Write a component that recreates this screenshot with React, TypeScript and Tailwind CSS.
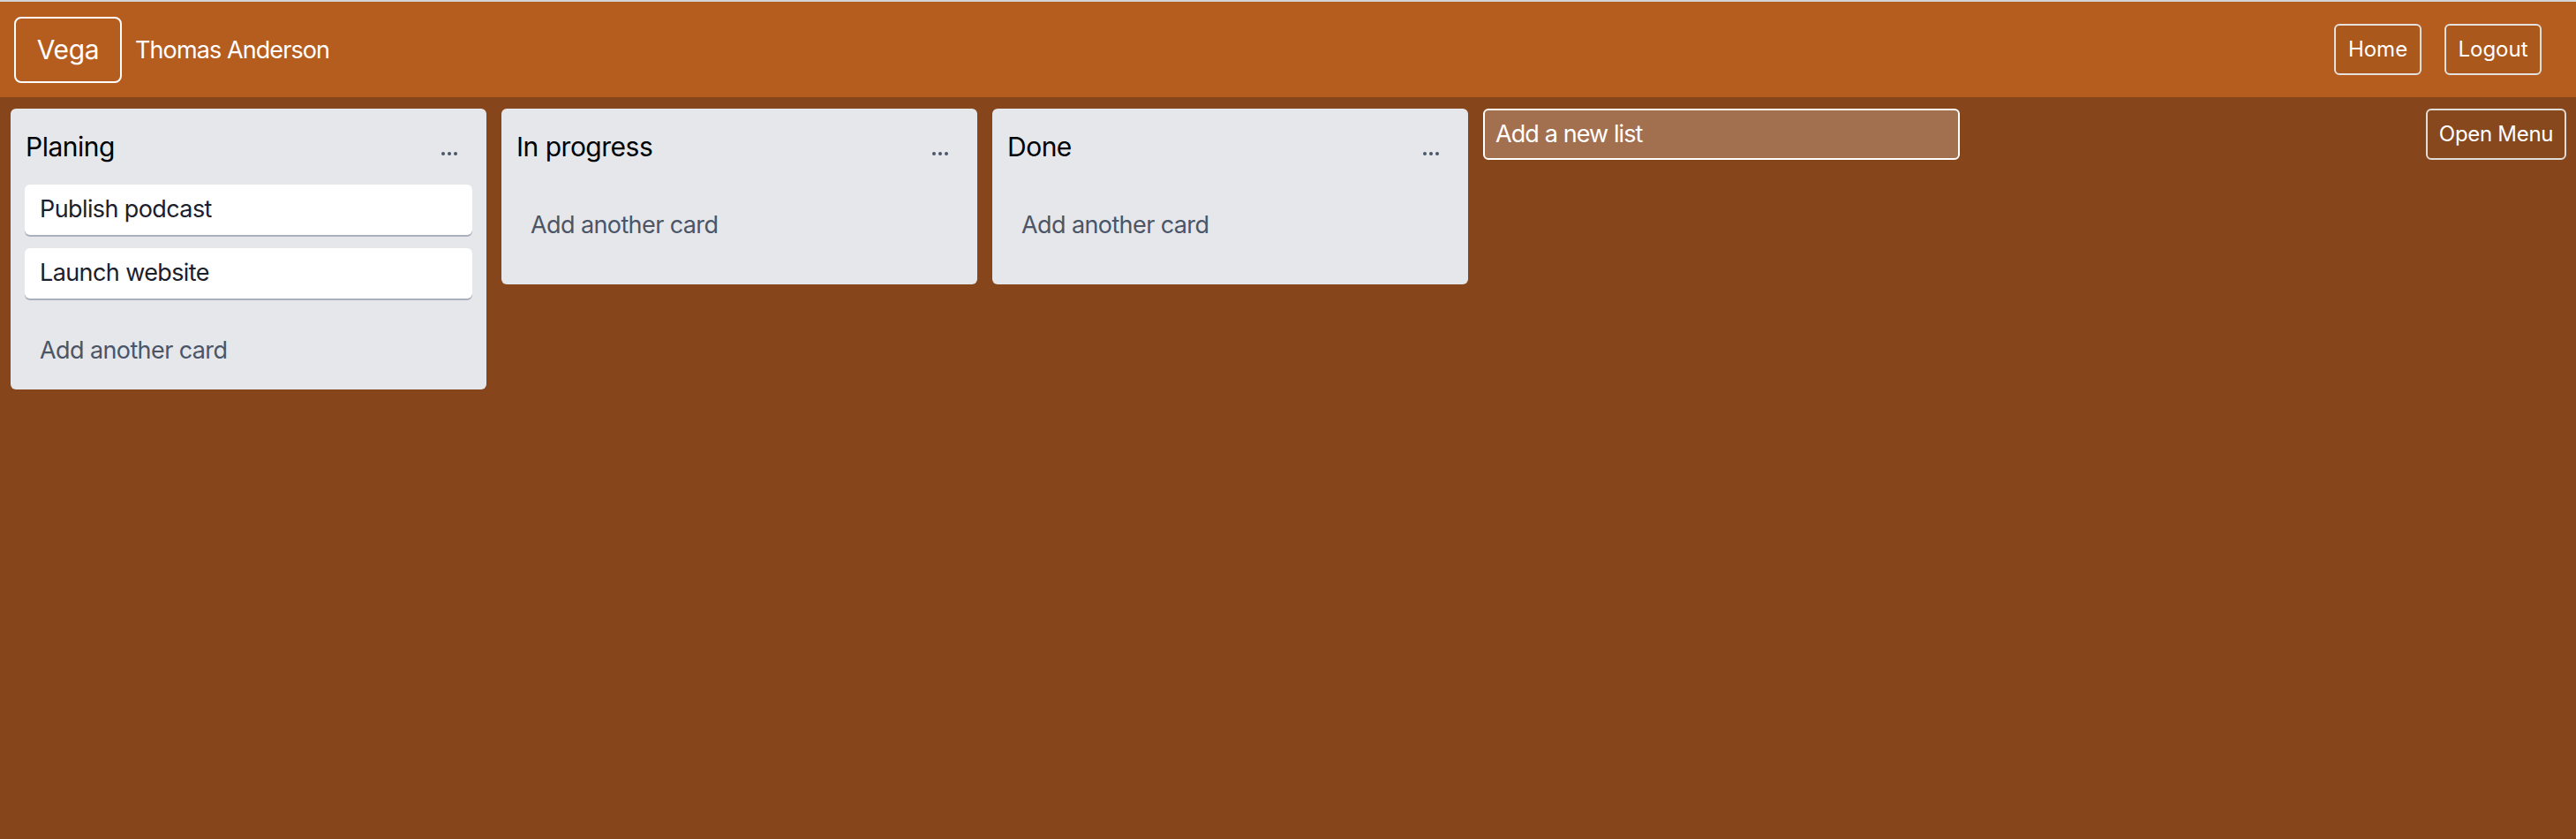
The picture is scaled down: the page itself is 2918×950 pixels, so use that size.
import React from "react";

type List = { title: string; cards: string[] };

const lists: List[] = [
  { title: "Planing", cards: ["Publish podcast", "Launch website"] },
  { title: "In progress", cards: [] },
  { title: "Done", cards: [] },
];

function Dots() {
  return (
    <div className="mt-[24px] mr-[17px] flex gap-[3px]">
      <span className="block h-[4px] w-[4px] rounded-full bg-[#4a5568]" />
      <span className="block h-[4px] w-[4px] rounded-full bg-[#4a5568]" />
      <span className="block h-[4px] w-[4px] rounded-full bg-[#4a5568]" />
    </div>
  );
}

function ListColumn({ list }: { list: List }) {
  const hasCards = list.cards.length > 0;
  return (
    <div className="flex w-[539px] shrink-0 flex-col rounded-[6px] bg-[#e5e7eb] px-4 pt-[25px]">
      <div className="flex items-start justify-between">
        <h2 className="pl-[1px] text-[30px] leading-[36px] tracking-[-0.5px] text-black">{list.title}</h2>
        <Dots />
      </div>
      {hasCards && (
        <div className="mt-[25px] flex flex-col gap-[15px]">
          {list.cards.map((c) => (
            <div
              key={c}
              className="rounded-[6px] bg-white px-[17px] pb-[13px] pt-[11px] text-[27px] leading-[33px] tracking-[-0.6px] text-[#1a202c] shadow-[0_2px_0_#a9b1bf]"
            >
              {c}
            </div>
          ))}
        </div>
      )}
      <div
        className={
          hasCards
            ? "mt-[42px] pb-[28px] pl-[17px] text-[27px] leading-[33px] tracking-[-0.6px] text-[#4a5568]"
            : "mt-[54px] pb-[51px] pl-[17px] text-[27px] leading-[33px] tracking-[-0.6px] text-[#4a5568]"
        }
      >
        Add another card
      </div>
    </div>
  );
}

export default function App() {
  return (
    <div
      className="flex min-h-screen flex-col border-t-2 border-[#d4d4d4] bg-[#86451a]"
      style={{ fontFamily: "Inter, 'Noto Sans', sans-serif" }}
    >
      <header className="flex h-[108px] items-center bg-[#b55d1e] pl-4 pr-[39px]">
        <div className="flex h-[75px] w-[122px] items-center justify-center rounded-[8px] border-2 border-white text-[30px] tracking-[-0.4px] text-white">
          Vega
        </div>
        <div className="ml-[15px] pt-[2px] text-[27px] tracking-[-0.9px] text-white">Thomas Anderson</div>
        <div className="ml-auto flex gap-[26px]">
          <button className="h-[58px] w-[99px] rounded-[6px] border-2 border-[#e6e0dc] bg-black/5 text-[24px] text-white">
            Home
          </button>
          <button className="h-[58px] w-[110px] rounded-[6px] border-2 border-[#e6e0dc] bg-black/5 text-[24px] text-white">
            Logout
          </button>
        </div>
      </header>
      <main className="flex items-start gap-[17px] pl-[12px] pr-[11px] pt-[13px]">
        {lists.map((l) => (
          <ListColumn key={l.title} list={l} />
        ))}
        <div className="flex h-[58px] w-[540px] shrink-0 items-center rounded-[6px] border-2 border-white bg-white/[0.23] pl-[12px] text-[27px] tracking-[-0.9px] text-white">
          Add a new list
        </div>
        <button className="ml-auto h-[58px] w-[159px] rounded-[6px] border-2 border-[#e0dcd8] bg-white/[0.02] text-[24px] tracking-[-0.3px] text-white">
          Open Menu
        </button>
      </main>
    </div>
  );
}
